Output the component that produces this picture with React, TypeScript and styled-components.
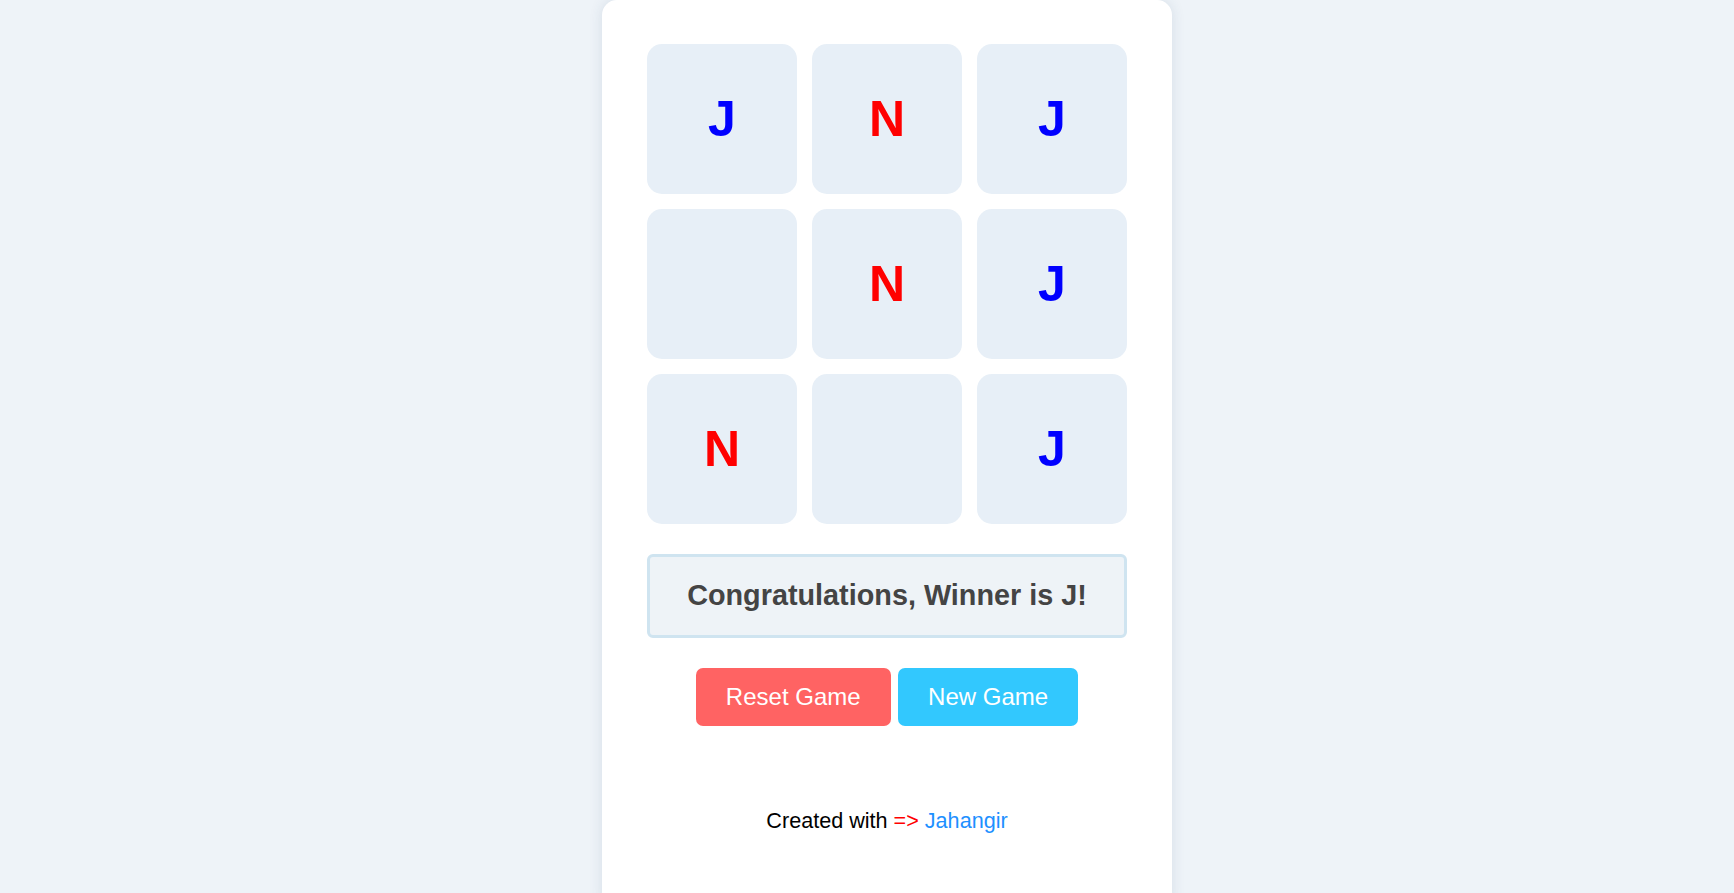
import React from "react";
import styled, { createGlobalStyle } from "styled-components";

const Global = createGlobalStyle`
  html, body {
    margin: 0;
    padding: 0;
    height: 100%;
    overflow: hidden;
    background: #eef3f8;
    font-family: "Liberation Sans", Arial, sans-serif;
  }
`;

const Page = styled.div`
  display: flex;
  justify-content: center;
  align-items: flex-start;
  height: 100vh;
  overflow: hidden;
  padding-left: 40px;
`;

const Card = styled.div`
  width: 570px;
  box-sizing: border-box;
  height: 910px;
  background: #ffffff;
  border-radius: 15px;
  box-shadow: 0 0 14px rgba(40, 70, 110, 0.12);
  padding: 44px 45px 0;
  display: flex;
  flex-direction: column;
  align-items: center;
`;

const Board = styled.div`
  display: grid;
  grid-template-columns: repeat(3, 150px);
  grid-auto-rows: 150px;
  gap: 15px;
`;

const Cell = styled.div<{ $mark: string }>`
  background: #e7eff7;
  border-radius: 15px;
  display: flex;
  align-items: center;
  justify-content: center;
  font-size: 50px;
  font-weight: 700;
  color: ${(p) => (p.$mark === "J" ? "#0000ff" : "#ff0000")};
  padding-bottom: 1px;
  box-sizing: border-box;
`;

const Message = styled.div`
  margin-top: 30px;
  width: 480px;
  box-sizing: border-box;
  height: 84px;
  border: 3px solid #cfe4f0;
  border-radius: 6px;
  background: #eef3f7;
  color: #444444;
  font-size: 28.8px;
  font-weight: 700;
  display: flex;
  align-items: center;
  justify-content: center;
  padding-bottom: 2px;
`;

const Actions = styled.div`
  margin-top: 30px;
  display: flex;
  gap: 7.5px;
`;

const Button = styled.button<{ $tone: "red" | "blue" }>`
  border: none;
  border-radius: 7px;
  height: 57.5px;
  padding: 0 30px;
  font-family: "Liberation Sans", Arial, sans-serif;
  font-size: 24px;
  color: #ffffff;
  background: ${(p) => (p.$tone === "red" ? "#ff6363" : "#32c8fe")};
  cursor: pointer;
`;

const Footer = styled.p`
  margin: 83px 0 0;
  font-size: 21.6px;
  color: #000000;
  line-height: 1.15;
`;

const Arrow = styled.span`
  color: #ff0000;
`;

const Author = styled.span`
  color: #1e90ff;
`;

const board = ["J", "N", "J", "", "N", "J", "N", "", "J"];

export default function App() {
  return (
    <>
      <Global />
      <Page>
        <Card>
          <Board>
            {board.map((m, i) => (
              <Cell key={i} $mark={m}>
                {m}
              </Cell>
            ))}
          </Board>
          <Message>Congratulations, Winner is J!</Message>
          <Actions>
            <Button $tone="red">Reset Game</Button>
            <Button $tone="blue">New Game</Button>
          </Actions>
          <Footer>
            Created with <Arrow>=&gt;</Arrow> <Author>Jahangir</Author>
          </Footer>
        </Card>
      </Page>
    </>
  );
}
